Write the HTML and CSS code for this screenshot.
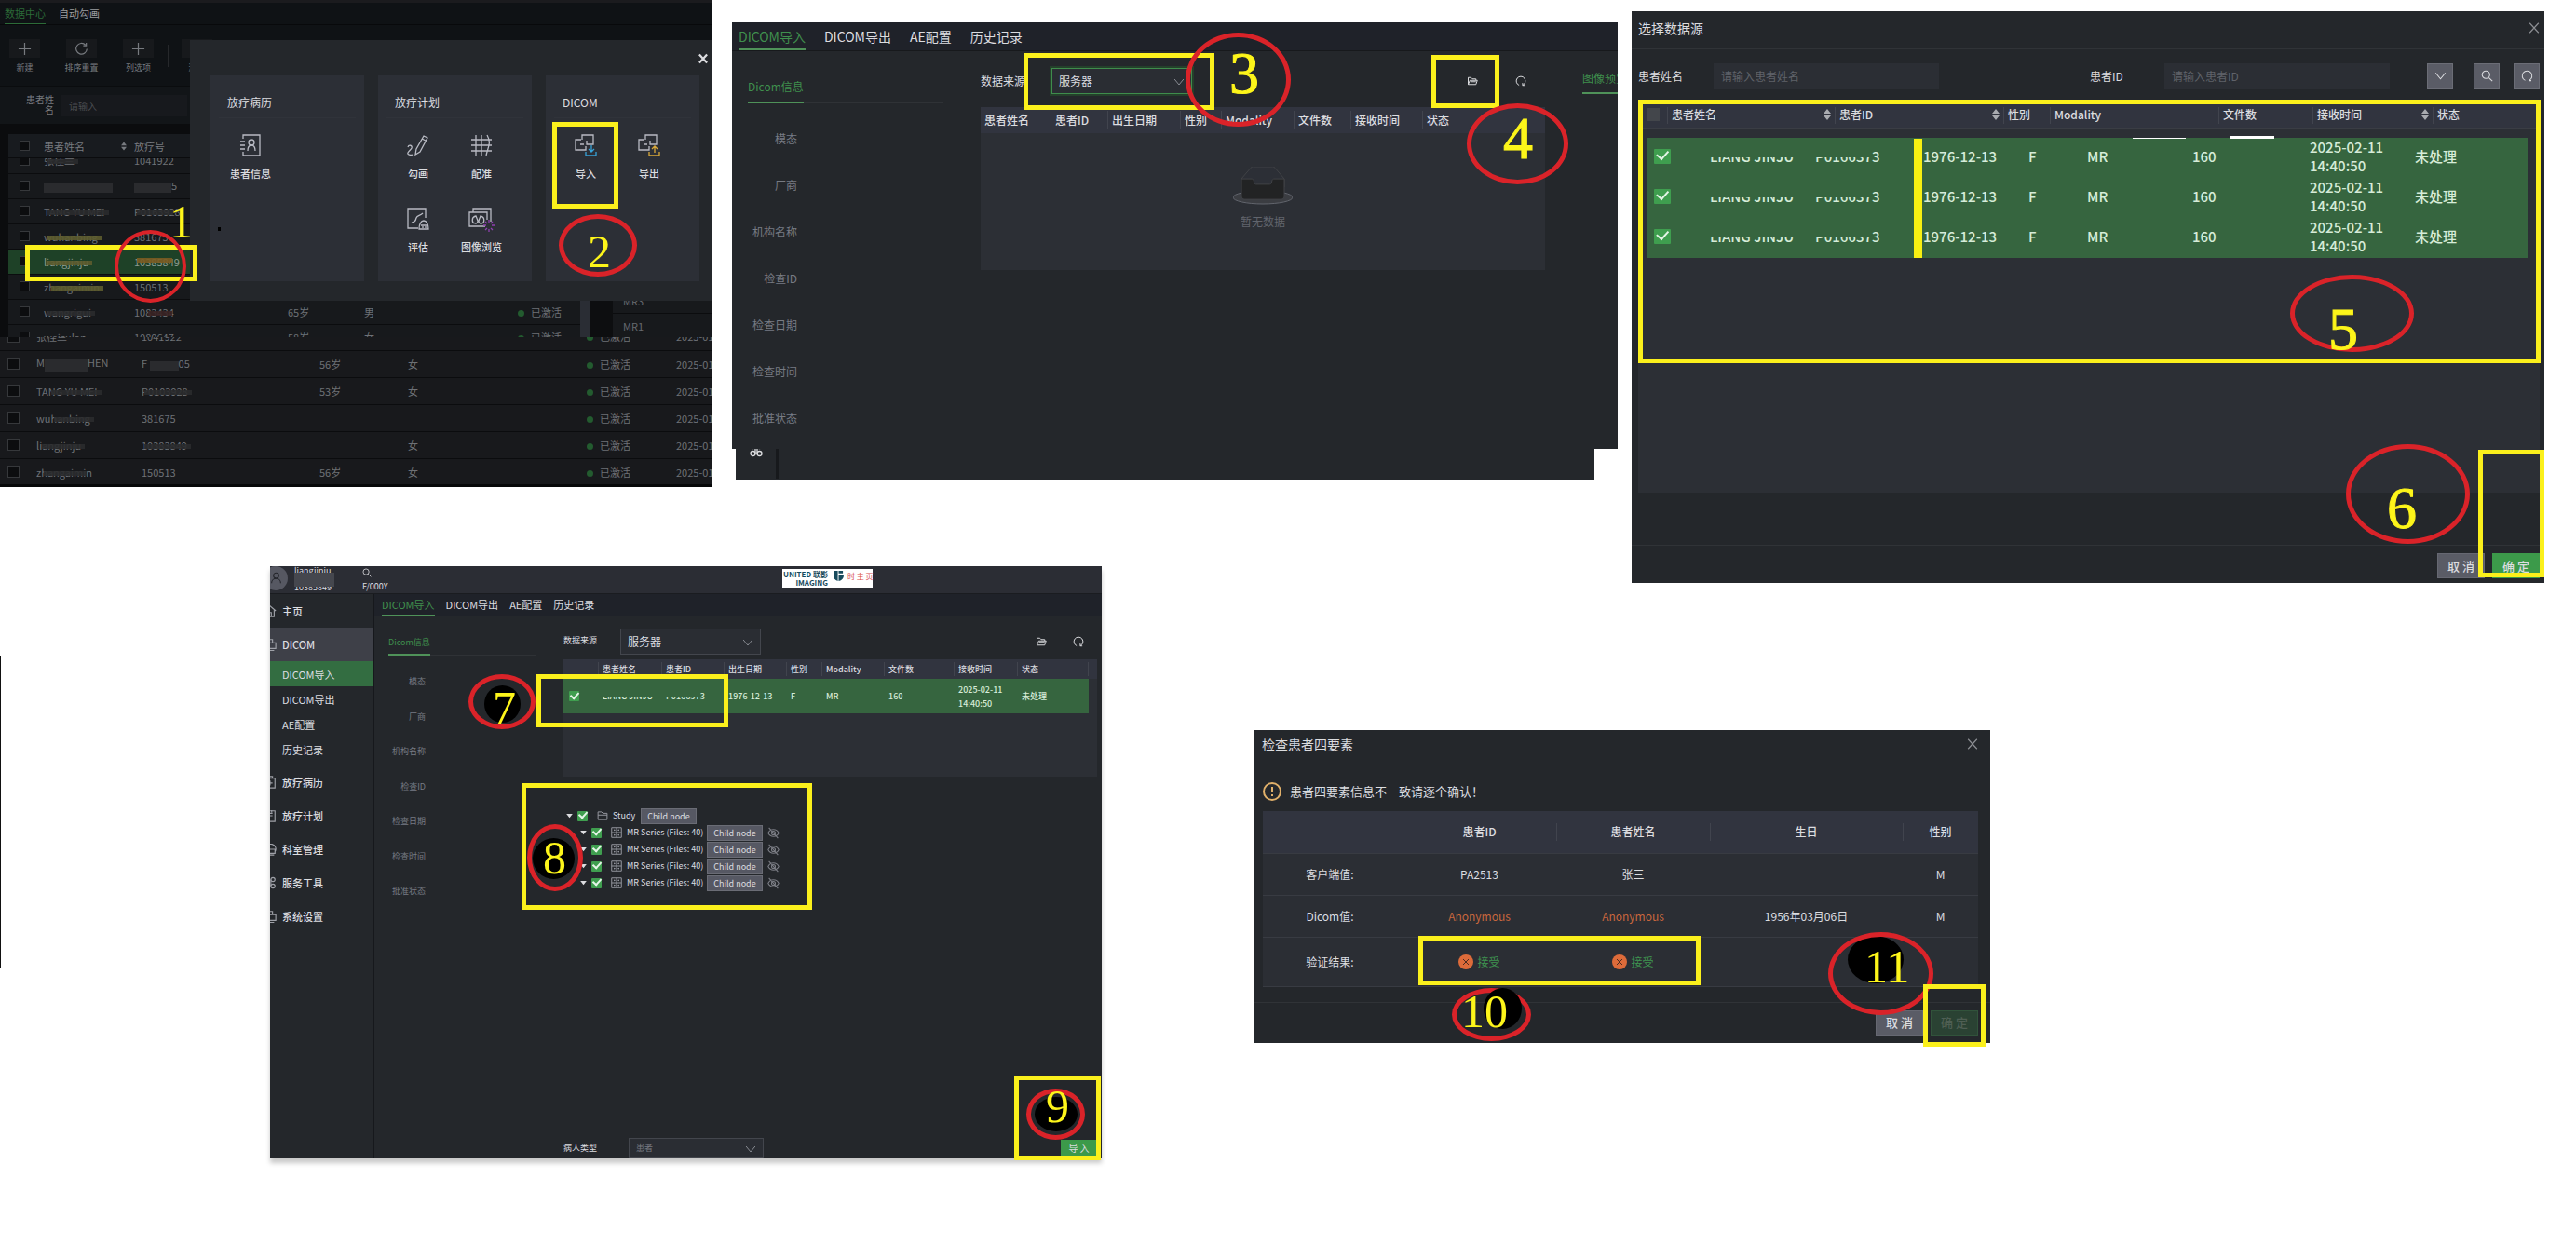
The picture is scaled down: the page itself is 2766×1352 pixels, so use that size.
FILE: index.html
```html
<!DOCTYPE html>
<html lang="zh-CN">
<head>
<meta charset="utf-8">
<title>DICOM导入流程</title>
<link rel="stylesheet" href="styles.css">
</head>
<body>
<svg class="sprite" aria-hidden="true">
  <symbol id="i-plus" viewBox="0 0 16 16"><path d="M8 1v14M1 8h14"/></symbol>
  <symbol id="i-reload" viewBox="0 0 16 16"><path d="M12.5 3.5A6.2 6.2 0 1 0 14.2 8M13.500 1v3.500H10"/></symbol>
  <symbol id="i-redo" viewBox="0 0 16 16"><path d="M5.500 14A6.500 6.500 0 1 1 10.500 14M10.500 10.800V14.300H13.500"/></symbol>
  <symbol id="i-folder" viewBox="0 0 16 16"><path d="M2 13V3h4l2 2h5v2M2 13l2.500-6H15l-2 6zM5 9h8"/></symbol>
  <symbol id="i-folder-closed" viewBox="0 0 16 16"><path d="M1.500 13.500v-11h5l2 2h6v9zM1.500 7h13"/></symbol>
  <symbol id="i-down" viewBox="0 0 16 16"><path d="M1.500 4l6.500 8 6.500-8"/></symbol>
  <symbol id="i-close" viewBox="0 0 16 16"><path d="M2.500 2l11 12M13.500 2l-11 12"/></symbol>
  <symbol id="i-search" viewBox="0 0 16 16"><circle cx="6.500" cy="6.500" r="5"/><path d="M10.200 10.200L15 15"/></symbol>
  <symbol id="i-sort" viewBox="0 0 8 12"><path d="M4 0l4 5H0zM4 12l4-5H0z"/></symbol>
  <symbol id="i-caret" viewBox="0 0 8 6"><path d="M0 0h8L4 5z"/></symbol>
  <symbol id="i-user" viewBox="0 0 16 16"><circle cx="8" cy="5" r="3.500"/><path d="M2 15c0-8 12-8 12 0"/></symbol>
  <symbol id="i-home" viewBox="0 0 16 16"><path d="M1 8l7-6 7 6M3 7v8h10V7M6.500 15v-5h3v5"/></symbol>
  <symbol id="i-screens" viewBox="0 0 16 16"><path d="M5 9H1V2h10v4M6 6h9v7H6zM3 12h2M8 15.500h5"/></symbol>
  <symbol id="i-case" viewBox="0 0 16 16"><path d="M2 3h12v12H2zM5 3V1h6v2M8 6v6M5 9h6"/></symbol>
  <symbol id="i-list" viewBox="0 0 16 16"><path d="M2 2h12v13H2zM8 5h3M8 8h3M6 12h5M10 1v3"/></symbol>
  <symbol id="i-dept" viewBox="0 0 16 16"><path d="M3 8a6 6 0 1 1 11 3M6 8h8v5H6zM8 15h5"/></symbol>
  <symbol id="i-cmd" viewBox="0 0 16 16"><circle cx="4.500" cy="4" r="2.500"/><circle cx="11.500" cy="4" r="2.500"/><circle cx="4.500" cy="12" r="2.500"/><circle cx="11.500" cy="12" r="2.500"/><path d="M7 4v8M9 4v8"/></symbol>
  <symbol id="i-grid" viewBox="0 0 16 16"><path d="M1 1h14v14H1zM8 1v14M1 8h14M4 4.500h2M10 4.500h2M4 11.500h2M10 11.500h2M5 3.500v2M11 3.500v2M5 10.500v2M11 10.500v2"/></symbol>
  <symbol id="i-eye-off" viewBox="0 0 16 16"><path d="M1 8c3-6 11-6 14 0-3 6-11 6-14 0zM2 1l12 14"/><circle cx="8" cy="8" r="2.500"/></symbol>
  <symbol id="i-patient" viewBox="0 0 24 24"><path d="M4 5V1h18v22H4v-4M1 8h5M1 12h5M1 16h5M9 18c0-5 2-6 4-6s4 1 4 6"/><circle cx="13" cy="9" r="3"/></symbol>
  <symbol id="i-draw" viewBox="0 0 24 24"><path d="M1 14c1-3 5-2 4 1-1 2-3 3-4 5s3 3 5 2M9 22l1-6 8-14 4 2-8 15zM16 5l4 2"/></symbol>
  <symbol id="i-register" viewBox="0 0 24 24"><path d="M6 1v22M12 1v22M18 1c5 9 1 12-1 22M1 6h22M1 12h22M1 18h22"/></symbol>
  <symbol id="i-assess" viewBox="0 0 24 24"><path d="M12 22H1V1h19v10M5 16c3-1 4-1 5-5 1-3 4-2 7-5M13 23c0-5 2-9 5-9s5 4 5 9zM15 19h6M17 22v-2M20 22v-2"/></symbol>
  <symbol id="i-browse" viewBox="0 0 28 26"><path d="M5 5V1h19v14M18 20H1V5h19v8M8 9c-5 1-5 8 0 8 4-1 1-5 0-8zM13 9c5 1 5 8 0 8-4-1-1-5 0-8z"/><path class="violet" d="M22 13v3M22 23v3M16 19h3M25 19h3M18 15l2 2M24 22l2 2M26 15l-2 2M20 22l-2 2"/></symbol>
  <symbol id="i-import" viewBox="0 0 24 24"><path d="M7 6H1v11h11v-4M6 11h4M8 6V1h12v10h-7V7"/><path class="sky" d="M18 12v7M15 16l3 3 3-3M12 19v4h11v-4"/></symbol>
  <symbol id="i-export" viewBox="0 0 24 24"><path d="M7 6H1v11h11v-4M6 11h4M8 6V1h12v10h-7V7"/><path class="gold" d="M18 20v-7M15 16l3-3 3 3M12 19v4h11v-4"/></symbol>
</svg>

<main class="board">
  <div class="row row-top">

    <section class="panel center-panel">
      <nav class="dc-tabs"><a class="on" href="#data">数据中心</a><a href="#auto">自动勾画</a></nav>
      <div class="dc-tools">
        <button><i><svg><use href="#i-plus"/></svg></i>新建</button>
        <button><i><svg><use href="#i-reload"/></svg></i>排序重置</button>
        <button><i><svg><use href="#i-plus"/></svg></i>列选项</button>
        <span class="rule"></span>
        <button><i><svg><use href="#i-reload"/></svg></i>激活</button>
      </div>
      <div class="dc-search"><label for="dc-name">患者姓名</label><input id="dc-name" placeholder="请输入"></div>
      <div class="dc-upper">
        <div class="dc-list">
          <div class="dc-head"><input type="checkbox" aria-label="全选"><span class="name">患者姓名</span><svg class="sort"><use href="#i-sort"/></svg><span>放疗号</span></div>
          <div class="dc-view">
            <table class="dc-table">
              <colgroup><col class="w38"><col class="w97"><col class="w165"><col class="w82"><col class="w165"><col></colgroup>
              <tr><td><input type="checkbox" aria-label="选择"></td><td><span class="mask">张桂兰</span></td><td>1041922</td><td></td><td></td><td></td></tr>
              <tr><td><input type="checkbox" aria-label="选择"></td><td><span class="block"></span></td><td><span class="block short"></span>5</td><td></td><td></td><td></td></tr>
              <tr><td><input type="checkbox" aria-label="选择"></td><td><span class="mask">TANG YU MEI</span></td><td><span class="mask">P01639</span>28</td><td></td><td></td><td></td></tr>
              <tr><td><input type="checkbox" aria-label="选择"></td><td><span class="mask olive">wuhanbing</span></td><td>381675</td><td></td><td></td><td></td></tr>
              <tr class="picked"><td><input type="checkbox" aria-label="选择"></td><td><span class="mask olive">liangjinju</span></td><td><span class="mask amber">103858</span>49</td><td></td><td></td><td></td></tr>
              <tr><td><input type="checkbox" aria-label="选择"></td><td>z<span class="mask olive">hangaimin</span></td><td>150513</td><td></td><td></td><td></td></tr>
              <tr><td><input type="checkbox" aria-label="选择"></td><td><span class="mask">wangrigui</span></td><td>10<span class="mask rose">8343</span>4</td><td>65岁</td><td>男</td><td><b class="dot"></b>已激活</td></tr>
              <tr><td><input type="checkbox" aria-label="选择"></td><td>weisulan</td><td>1080647</td><td>58岁</td><td>女</td><td><b class="dot"></b>已激活</td></tr>
            </table>
          </div>
        </div>
        <div class="dc-bar"></div>
        <div class="dc-series"><p>MR3</p><p>MR1</p></div>
      </div>
      <div class="dc-lower">
        <table class="dc-table big">
          <colgroup><col class="w39"><col class="w113"><col class="w191"><col class="w95"><col class="w192"><col class="w96"><col></colgroup>
          <tr><td><input type="checkbox" aria-label="选择"></td><td>张桂兰</td><td>1041922</td><td></td><td></td><td><b class="dot"></b>已激活</td><td>2025-01</td></tr>
          <tr><td><input type="checkbox" aria-label="选择"></td><td>M<span class="block mid"></span>HEN</td><td>F <span class="block tiny"></span>05</td><td>56岁</td><td>女</td><td><b class="dot"></b>已激活</td><td>2025-01</td></tr>
          <tr><td><input type="checkbox" aria-label="选择"></td><td>TA<span class="mask">NG YU MEI</span></td><td><span class="mask">P0103928</span></td><td>53岁</td><td>女</td><td><b class="dot"></b>已激活</td><td>2025-01</td></tr>
          <tr><td><input type="checkbox" aria-label="选择"></td><td>wu<span class="mask">hanbing</span></td><td>381675</td><td></td><td></td><td><b class="dot"></b>已激活</td><td>2025-01</td></tr>
          <tr><td><input type="checkbox" aria-label="选择"></td><td>l<span class="mask">iangjinju</span></td><td><span class="mask">10383849</span></td><td></td><td>女</td><td><b class="dot"></b>已激活</td><td>2025-01</td></tr>
          <tr><td><input type="checkbox" aria-label="选择"></td><td>z<span class="mask">hangaim</span>in</td><td>150513</td><td>56岁</td><td>女</td><td><b class="dot"></b>已激活</td><td>2025-01</td></tr>
        </table>
      </div>

      <div class="launcher">
        <button class="launcher-x" aria-label="关闭"><svg><use href="#i-close"/></svg></button>
        <div class="cards">
          <div class="card"><h3>放疗病历</h3><div class="apps">
            <button><svg><use href="#i-patient"/></svg>患者信息</button></div></div>
          <div class="card"><h3>放疗计划</h3><div class="apps">
            <button><svg><use href="#i-draw"/></svg>勾画</button>
            <button><svg><use href="#i-register"/></svg>配准</button>
            <button><svg><use href="#i-assess"/></svg>评估</button>
            <button><svg class="wide"><use href="#i-browse"/></svg>图像浏览</button></div></div>
          <div class="card"><h3>DICOM</h3><div class="apps">
            <button><svg><use href="#i-import"/></svg>导入</button>
            <button><svg><use href="#i-export"/></svg>导出</button></div></div>
        </div>
      </div>
      <span class="speck"></span>
      <span class="box b1"></span><span class="ring r1"></span><span class="num n1">1</span>
      <span class="box b2"></span><span class="ring r2"></span><span class="num n2">2</span>
    </section>

    <section class="panel import-panel">
      <div class="import-main">
        <nav class="tabs"><a class="on" href="#in">DICOM导入</a><a href="#out">DICOM导出</a><a href="#ae">AE配置</a><a href="#log">历史记录</a></nav>
        <div class="import-body">
          <aside class="info">
            <h4><span>Dicom信息</span></h4>
            <ul><li>模态</li><li>厂商</li><li>机构名称</li><li>检查ID</li><li>检查日期</li><li>检查时间</li><li>批准状态</li></ul>
          </aside>
          <div class="work">
            <div class="source"><label for="src1">数据来源</label>
              <span class="pick focus"><select id="src1"><option>服务器</option></select><svg><use href="#i-down"/></svg></span>
              <button class="ico first" aria-label="打开"><svg><use href="#i-folder"/></svg></button><button class="ico" aria-label="刷新"><svg><use href="#i-redo"/></svg></button></div>
            <div class="grid-area">
              <table class="cols">
                <colgroup><col class="w76"><col class="w61"><col class="w78"><col class="w44"><col class="w78"><col class="w61"><col class="w77"><col></colgroup>
                <tr><th>患者姓名</th><th>患者ID</th><th>出生日期</th><th>性别</th><th>Modality</th><th>文件数</th><th>接收时间</th><th>状态</th></tr>
              </table>
              <div class="empty">
                <svg viewBox="0 0 64 41"><ellipse cx="32" cy="33" rx="32" ry="7" fill="#3b3d42"/><path d="M55 13L45 1.300C44.400.500 43.600 0 42.700 0H21.300c-.9 0-1.700.500-2.300 1.300L9 13v9h46z" fill="#2c2f36" stroke="#404246"/><path d="M41.600 16c0-1.600 1-2.900 2.200-2.900H55v18.100c0 2.200-1.300 3.900-3 3.900H12c-1.700 0-3-1.700-3-3.900V13.100h11.200c1.200 0 2.200 1.300 2.200 2.900s1 2.900 2.200 2.900h14.800c1.200 0 2.200-1.300 2.200-2.900z" fill="#222324" stroke="#404246"/></svg>
                <p>暂无数据</p>
              </div>
            </div>
          </div>
          <div class="preview"><span>图像预览</span></div>
        </div>
      </div>
      <div class="import-tail"><svg><use href="#i-cmd"/></svg><span></span></div>
      <span class="box b3"></span><span class="ring r3"></span><span class="num lg n3">3</span>
      <span class="box b4"></span><span class="ring r4"></span><span class="num lg n4">4</span>
    </section>

    <section class="panel select-panel">
      <header class="dialog-head"><h2>选择数据源</h2><button aria-label="关闭"><svg><use href="#i-close"/></svg></button></header>
      <div class="query">
        <label for="q-name">患者姓名</label><input id="q-name" placeholder="请输入患者姓名">
        <label class="second" for="q-id">患者ID</label><input id="q-id" placeholder="请输入患者ID">
        <button class="tool t1" aria-label="展开"><svg><use href="#i-down"/></svg></button><button class="tool t2" aria-label="搜索"><svg><use href="#i-search"/></svg></button><button class="tool t3" aria-label="重置"><svg><use href="#i-redo"/></svg></button>
      </div>
      <div class="select-grid">
        <table class="cols">
          <colgroup><col class="w32"><col class="w180"><col class="w181"><col class="w50"><col class="w181"><col class="w101"><col class="w129"><col></colgroup>
          <tr><th class="tick"><input type="checkbox" aria-label="全选"></th><th><span class="th">患者姓名<svg><use href="#i-sort"/></svg></span></th><th><span class="th">患者ID<svg><use href="#i-sort"/></svg></span></th><th>性别</th><th>Modality</th><th>文件数</th><th><span class="th">接收时间<svg><use href="#i-sort"/></svg></span></th><th>状态</th></tr>
        </table>
        <table class="hits">
          <colgroup><col class="w67"><col class="w113"><col class="w116"><col class="w113"><col class="w63"><col class="w113"><col class="w126"><col class="w113"><col></colgroup>
          <tr><td><input type="checkbox" checked aria-label="选择"></td><td><span class="fade">LIANG JINJU</span></td><td><span class="fade">P016637</span>3</td><td>1976-12-13</td><td>F</td><td>MR</td><td>160</td><td>2025-02-11<br>14:40:50</td><td>未处理</td></tr>
          <tr><td><input type="checkbox" checked aria-label="选择"></td><td><span class="fade">LIANG JINJU</span></td><td><span class="fade">P016637</span>3</td><td>1976-12-13</td><td>F</td><td>MR</td><td>160</td><td>2025-02-11<br>14:40:50</td><td>未处理</td></tr>
          <tr><td><input type="checkbox" checked aria-label="选择"></td><td><span class="fade">LIANG JINJU</span></td><td><span class="fade">P016637</span>3</td><td>1976-12-13</td><td>F</td><td>MR</td><td>160</td><td>2025-02-11<br>14:40:50</td><td>未处理</td></tr>
        </table>
      </div>
      <footer class="actions"><button class="btn">取 消</button><button class="btn ok">确 定</button></footer>
      <span class="chip c1"></span><span class="chip c2"></span><span class="strip"></span>
      <span class="box b5"></span><span class="ring r5"></span><span class="num lg n5">5</span>
      <span class="box b6"></span><span class="ring r6"></span><span class="num lg n6">6</span>
    </section>
  </div>

  <div class="row row-bottom">
    <section class="panel app-panel">
      <header class="app-head">
        <span class="avatar"><svg><use href="#i-user"/></svg></span>
        <span class="who">liangjinju<br>10385849</span>
        <span class="meta"><svg><use href="#i-search"/></svg>F/000Y</span>
        <span class="brand"><strong>UNITED 联影<br>IMAGING</strong><svg viewBox="0 0 12 12"><path d="M0 0h5v12Q0 10 0 6zM6 0h5v3H6zM6 5h6Q12 11 6 12z" fill="#174a5c"/></svg><em>时 主 页</em></span>
      </header>
      <div class="app-body">
        <nav class="side">
          <a class="top" href="#home"><svg><use href="#i-home"/></svg>主页</a>
          <a class="top open" href="#dicom"><svg><use href="#i-screens"/></svg>DICOM</a>
          <a class="sub on" href="#in">DICOM导入</a>
          <a class="sub" href="#out">DICOM导出</a>
          <a class="sub" href="#ae">AE配置</a>
          <a class="sub last" href="#log">历史记录</a>
          <a class="top" href="#rec"><svg><use href="#i-case"/></svg>放疗病历</a>
          <a class="top" href="#plan"><svg><use href="#i-list"/></svg>放疗计划</a>
          <a class="top" href="#dept"><svg><use href="#i-dept"/></svg>科室管理</a>
          <a class="top" href="#tools"><svg><use href="#i-cmd"/></svg>服务工具</a>
          <a class="top" href="#sys"><svg><use href="#i-screens"/></svg>系统设置</a>
        </nav>
        <div class="app-main">
          <nav class="tabs small"><a class="on" href="#in">DICOM导入</a><a href="#out">DICOM导出</a><a href="#ae">AE配置</a><a href="#log">历史记录</a></nav>
          <div class="app-work">
            <aside class="info small">
              <h4><span>Dicom信息</span></h4>
              <ul><li>模态</li><li>厂商</li><li>机构名称</li><li>检查ID</li><li>检查日期</li><li>检查时间</li><li>批准状态</li></ul>
            </aside>
            <div class="work small">
              <div class="source"><label for="src2">数据来源</label>
                <span class="pick"><select id="src2"><option>服务器</option></select><svg><use href="#i-down"/></svg></span>
                <button class="ico first" aria-label="打开"><svg><use href="#i-folder"/></svg></button><button class="ico" aria-label="刷新"><svg><use href="#i-redo"/></svg></button></div>
              <div class="grid-area">
                <table class="cols small">
                  <colgroup><col class="w38"><col class="w68"><col class="w67"><col class="w67"><col class="w38"><col class="w67"><col class="w75"><col class="w68"><col class="w76"><col></colgroup>
                  <tr><th></th><th>患者姓名</th><th>患者ID</th><th>出生日期</th><th>性别</th><th>Modality</th><th>文件数</th><th>接收时间</th><th>状态</th><th></th></tr>
                  <tr class="sel"><td class="tick"><input type="checkbox" checked aria-label="选择"></td><td><span class="fade">LIANG JINJU</span></td><td><span class="fade">P016637</span>3</td><td>1976-12-13</td><td>F</td><td>MR</td><td>160</td><td>2025-02-11<br>14:40:50</td><td>未处理</td><td class="off"></td></tr>
                </table>
              </div>
              <div class="tree">
                <div class="node"><svg class="caret"><use href="#i-caret"/></svg><input type="checkbox" id="st" checked><svg class="kind"><use href="#i-folder-closed"/></svg><label for="st">Study</label><button>Child node</button></div>
                <div class="node child"><svg class="caret"><use href="#i-caret"/></svg><input type="checkbox" id="s1" checked><svg class="kind"><use href="#i-grid"/></svg><label for="s1">MR Series (Files: 40)</label><button>Child node</button><svg class="eye"><use href="#i-eye-off"/></svg></div>
                <div class="node child"><svg class="caret"><use href="#i-caret"/></svg><input type="checkbox" id="s2" checked><svg class="kind"><use href="#i-grid"/></svg><label for="s2">MR Series (Files: 40)</label><button>Child node</button><svg class="eye"><use href="#i-eye-off"/></svg></div>
                <div class="node child"><svg class="caret"><use href="#i-caret"/></svg><input type="checkbox" id="s3" checked><svg class="kind"><use href="#i-grid"/></svg><label for="s3">MR Series (Files: 40)</label><button>Child node</button><svg class="eye"><use href="#i-eye-off"/></svg></div>
                <div class="node child"><svg class="caret"><use href="#i-caret"/></svg><input type="checkbox" id="s4" checked><svg class="kind"><use href="#i-grid"/></svg><label for="s4">MR Series (Files: 40)</label><button>Child node</button><svg class="eye"><use href="#i-eye-off"/></svg></div>
              </div>
              <div class="submit"><label for="ptype">病人类型</label>
                <span class="pick"><select id="ptype"><option>患者</option></select><svg><use href="#i-down"/></svg></span>
                <button class="go">导 入</button></div>
            </div>
          </div>
        </div>
      </div>
      <span class="box b7"></span><span class="blot k7"></span><span class="ring r7"></span><span class="num n7">7</span>
      <span class="box b8"></span><span class="blot k8"></span><span class="ring r8"></span><span class="num n8">8</span>
      <span class="box b9"></span><span class="blot k9"></span><span class="ring r9"></span><span class="num n9">9</span>
    </section>

    <section class="panel check-panel">
      <header class="dialog-head"><h2>检查患者四要素</h2><button aria-label="关闭"><svg><use href="#i-close"/></svg></button></header>
      <p class="alert"><svg viewBox="0 0 20 20"><circle cx="10" cy="10" r="9"/><path d="M10 5v6M10 13v2"/></svg>患者四要素信息不一致请逐个确认！</p>
      <table class="verify">
        <colgroup><col class="w150"><col class="w165"><col class="w165"><col class="w207"><col></colgroup>
        <tr><th></th><th>患者ID</th><th>患者姓名</th><th>生日</th><th>性别</th></tr>
        <tr><td>客户端值:</td><td>PA2513</td><td>张三</td><td></td><td>M</td></tr>
        <tr><td>Dicom值:</td><td class="bad">Anonymous</td><td class="bad">Anonymous</td><td>1956年03月06日</td><td>M</td></tr>
        <tr class="result"><td>验证结果:</td><td><span class="verdict"><svg viewBox="0 0 16 16"><circle cx="8" cy="8" r="8"/><path d="M5 5l6 6M11 5l-6 6"/></svg><a href="#accept">接受</a></span></td><td><span class="verdict"><svg viewBox="0 0 16 16"><circle cx="8" cy="8" r="8"/><path d="M5 5l6 6M11 5l-6 6"/></svg><a href="#accept">接受</a></span></td><td></td><td></td></tr>
      </table>
      <footer class="actions"><button class="btn">取 消</button><button class="btn ok" disabled>确 定</button></footer>
      <span class="box b10"></span><span class="ring r10"></span><span class="blot k10"></span><span class="num n10">10</span>
      <span class="blot k11"></span><span class="ring r11"></span><span class="box b11"></span><span class="num n11">11</span>
    </section>
  </div>
  <span class="edge"></span>
</main>
</body>
</html>
```
FILE: styles.css
```css
* { box-sizing: border-box; }
body {
  margin: 0;
  background: #fff;
  color: #dcdde0;
  font: 12px/16px "Noto Sans CJK SC", sans-serif;
}
h2, h3, h4, p, ul { margin: 0; padding: 0; font-weight: 400; list-style: none; }
a { color: inherit; text-decoration: none; }
button, input, select { margin: 0; padding: 0; border: 0; border-radius: 0; background: none; color: inherit; font: inherit; }
svg { display: block; flex: none; width: 16px; height: 16px; fill: none; stroke: currentColor; stroke-width: 1.3; }
.sprite { position: absolute; width: 0; height: 0; }
.violet { stroke: #8e3fb0; }
.sky { stroke: #36a3d9; }
.gold { stroke: #d9a93a; }
#i-sort path, #i-caret path { fill: currentColor; stroke: none; }
table { border-collapse: collapse; table-layout: fixed; width: 100%; }
td, th { padding: 0; text-align: left; font-weight: 500; white-space: nowrap; }
td { font-weight: 400; }

input[type="checkbox"] { appearance: none; display: grid; place-items: center; flex: none; }
input:checked { background: #3f9e4f; border-radius: 1px; }
input:checked::after {
  content: "";
  width: 35%;
  height: 65%;
  border: solid #e6f5e8;
  border-width: 0 2px 2px 0;
  rotate: 42deg;
  translate: 0 -15%;
}

.w32 { width: 32px } .w38 { width: 38px } .w39 { width: 39px } .w44 { width: 44px } .w50 { width: 50px }
.w61 { width: 61px } .w63 { width: 63px } .w67 { width: 67px } .w68 { width: 68px } .w75 { width: 75px }
.w76 { width: 76px } .w77 { width: 77px } .w78 { width: 78px } .w82 { width: 82px } .w95 { width: 95px }
.w96 { width: 96px } .w97 { width: 97px } .w101 { width: 101px } .w113 { width: 113px }
.w116 { width: 116px } .w126 { width: 126px } .w129 { width: 129px } .w150 { width: 150px } .w165 { width: 165px }
.w180 { width: 180px } .w181 { width: 181px } .w191 { width: 191px } .w192 { width: 192px } .w207 { width: 207px }

/* board */
.board { position: relative; min-height: 100vh; overflow: hidden; }
.row { display: grid; align-items: start; }
.row-top { grid-template-columns: 764fr 22fr 951fr 15fr 980fr 34fr; }
.row-bottom { grid-template-columns: 290fr 893fr 164fr 790fr 629fr; margin-top: -18px; }
.panel { position: relative; min-width: 0; background: #24272b; }
.center-panel { grid-column: 1; }
.import-panel { grid-column: 3; margin-top: 24px; }
.select-panel { grid-column: 5; margin-top: 12px; }
.app-panel { grid-column: 2; }
.check-panel { grid-column: 4; margin-top: 176px; }
.edge { position: absolute; left: 0; top: 704px; width: 1px; height: 335px; background: #111; }

/* annotations */
.box, .ring, .num, .blot, .strip, .chip, .speck { position: absolute; pointer-events: none; }
.box { border: 5px solid #fbf01c; }
.ring { border: 5px solid #da2329; border-radius: 50%; }
.blot { border-radius: 50%; background: #000; }
.num { color: #fdf51a; font: 50px/50px "Liberation Serif", serif; }
.num.lg { font-size: 64px; line-height: 64px; -webkit-text-stroke: 1px #fdf51a; }
.speck { left: 234px; top: 244px; width: 3px; height: 4px; background: #000; }
.b1 { left: 27px; top: 263px; width: 185px; height: 39px; }
.r1 { left: 123px; top: 247px; width: 77px; height: 78px; border-width: 4px; }
.n1 { left: 182px; top: 213px; }
.b2 { left: 593px; top: 131px; width: 71px; height: 93px; }
.r2 { left: 600px; top: 230px; width: 84px; height: 67px; }
.n2 { left: 631px; top: 245px; }
.b3 { left: 313px; top: 33px; width: 205px; height: 61px; }
.r3 { left: 487px; top: 11px; width: 113px; height: 101px; }
.n3 { left: 534px; top: 23px; }
.b4 { left: 751px; top: 35px; width: 73px; height: 57px; }
.r4 { left: 789px; top: 87px; width: 109px; height: 87px; }
.n4 { left: 828px; top: 93px; }
.b5 { left: 7px; top: 95px; width: 969px; height: 283px; }
.r5 { left: 707px; top: 283px; width: 133px; height: 83px; }
.n5 { left: 748px; top: 310px; }
.b6 { left: 909px; top: 471px; width: 71px; height: 137px; }
.r6 { left: 767px; top: 465px; width: 133px; height: 107px; }
.n6 { left: 811px; top: 502px; }
.strip { left: 303px; top: 137px; width: 9px; height: 128px; background: #f8f012; }
.chip { background: #fff; }
.c1 { left: 538px; top: 136px; width: 57px; height: 1px; }
.c2 { left: 643px; top: 134px; width: 47px; height: 3px; }
.b7 { left: 286px; top: 116px; width: 206px; height: 57px; }
.r7 { left: 213px; top: 116px; width: 72px; height: 59px; }
.k7 { left: 230px; top: 128px; width: 39px; height: 40px; }
.n7 { left: 239px; top: 127px; }
.b8 { left: 270px; top: 233px; width: 312px; height: 136px; }
.r8 { left: 276px; top: 277px; width: 60px; height: 72px; }
.k8 { left: 282px; top: 292px; width: 45px; height: 44px; }
.n8 { left: 293px; top: 288px; }
.b9 { left: 799px; top: 547px; width: 93px; height: 91px; }
.r9 { left: 812px; top: 561px; width: 63px; height: 55px; }
.k9 { left: 821px; top: 570px; width: 46px; height: 37px; }
.n9 { left: 833px; top: 555px; }
.b10 { left: 176px; top: 221px; width: 303px; height: 53px; }
.r10 { left: 212px; top: 277px; width: 85px; height: 57px; }
.k10 { left: 246px; top: 277px; width: 41px; height: 44px; }
.n10 { left: 222px; top: 277px; }
.b11 { left: 718px; top: 273px; width: 67px; height: 67px; }
.r11 { left: 616px; top: 217px; width: 113px; height: 89px; }
.k11 { left: 637px; top: 221px; width: 60px; height: 51px; }
.n11 { left: 655px; top: 229px; }

/* data centre */
.center-panel { background: #0f1215; border-top: 3px solid #1b1b1e; border-bottom: 3px solid #070809; color: #777a7f; font-size: 11px; overflow: hidden; }
.center-panel .launcher, .center-panel .box, .center-panel .ring, .center-panel .num, .center-panel .speck { margin-top: -3px; }
.dc-tabs { display: flex; gap: 14px; height: 24px; padding-left: 5px; border-bottom: 1px solid #08090b; color: #9b9da0; line-height: 23px; }
.dc-tabs .on { color: #2c6b38; border-bottom: 1px solid #2c6b38; }
.dc-tools { display: flex; gap: 28px; height: 66px; padding: 15px 0 0 10px; border-bottom: 1px solid #0a0c0e; font-size: 9px; line-height: 12px; }
.dc-tools button { width: 33px; flex: none; white-space: nowrap; display: flex; flex-direction: column; align-items: center; gap: 5px; align-self: flex-start; }
.dc-tools i { display: grid; place-items: center; width: 33px; height: 20px; background: #17191c; }
.dc-tools svg { width: 15px; height: 15px; }
.rule { width: 1px; height: 24px; margin: 6px -14px 0 -13px; background: #26282b; }
.dc-search { display: flex; align-items: center; gap: 8px; height: 40px; padding-left: 26px; background: #121518; font-size: 10px; line-height: 11px; }
.dc-search label { width: 32px; text-align: right; padding-bottom: 3px; }
.dc-search input { width: 135px; height: 23px; padding-left: 8px; background: #17191d; }
.dc-search input::placeholder { color: #4b4d52; }
.dc-upper { display: flex; height: 229px; padding: 11px 0 0 9px; background: #0b0c0e; overflow: hidden; }
.dc-list { width: 614px; background: #17191c; }
.dc-head { display: flex; align-items: center; height: 26px; padding-left: 12px; background: #181b1f; border-bottom: 1px solid #0b0c0e; }
.dc-head .name { width: 83px; margin-left: 15px; }
.dc-head .sort { width: 6px; height: 10px; margin-right: 8px; }
.dc-view { height: 192px; overflow: hidden; }
.dc-table { margin-top: -11px; line-height: 14px; color: #6e7176; }
.dc-table td { height: 27px; border-bottom: 1px solid #0b0c0e; }
.dc-table td:first-child { padding-left: 12px; }
.center-panel input[type="checkbox"] { width: 11px; height: 11px; border: 1px solid #36383b; background: #0c0d0f; }
.picked td { background: #1e4127; color: #8c9a8e; }
.dot { display: inline-block; width: 7px; height: 7px; margin-right: 7px; border-radius: 50%; background: #235b2f; }
.dc-bar { width: 35px; flex: none; border-left: 10px solid #2a2d34; background: #0d0e10; }
.dc-series { flex: 1; background: #17191c; padding-top: 166px; }
.dc-series p { height: 27px; padding-left: 11px; border-bottom: 1px solid #0b0c0e; line-height: 26px; color: #66696e; }
.dc-lower { height: 158px; overflow: hidden; background: #18191c; }
.dc-table.big { margin-top: -15px; }
.big td { height: 29px; }
.big td:first-child { padding-left: 8px; }
.center-panel .big input { width: 13px; height: 13px; }
.mask { position: relative; }
.mask::after { content: ""; position: absolute; left: 3px; right: -4px; top: 7px; height: 5px; background: #2a2b2e; opacity: .9; }
.olive::after { background: #5d5c2f; }
.amber::after { background: #7b5c22; top: 4px; }
.rose::after { background: #3a2325; }
.block { display: inline-block; width: 74px; height: 10px; background: #2a2b2e; vertical-align: middle; }
.block.short { width: 40px; }
.block.mid { width: 46px; height: 14px; }
.block.tiny { width: 31px; }

.launcher { position: absolute; left: 204px; right: 0; top: 43px; height: 280px; padding: 38px 13px 22px 22px; background: #24272b; color: #dcdde0; }
.launcher-x { position: absolute; right: 3px; top: 14px; }
.launcher-x svg { width: 12px; height: 12px; stroke-width: 3; }
.cards { display: grid; grid-template-columns: repeat(3, 1fr); gap: 15px; height: 220px; }
.card { padding: 20px 9px 0; background: #2c2f36; }
.card h3 { height: 26px; padding-left: 9px; border-bottom: 1px solid #30333a; font-size: 12px; line-height: 18px; }
.apps { display: grid; grid-template-columns: 68px 68px; grid-auto-rows: 79px; padding-top: 17px; }
.apps button { display: flex; flex-direction: column; align-items: center; gap: 10px; font-size: 11px; font-weight: 500; white-space: nowrap; }
.apps svg { width: 24px; height: 24px; stroke: #b9bbc4; }
.apps svg.wide { width: 28px; height: 26px; margin-bottom: -2px; }

/* DICOM import */
.import-panel { background: none; }
.import-main { background: #24272b; overflow: hidden; }
.tabs { display: flex; gap: 20px; height: 31px; padding-left: 7px; background: #1f2229; border-bottom: 1px solid #17191c; font-size: 14px; line-height: 31px; }
.tabs .on, .info h4 span, .preview span { color: #3f8f4d; border-bottom: 2px solid #4f9259; }
.import-body { display: flex; padding-left: 17px; padding-bottom: 8px; }
.info { width: 210px; flex: none; margin-right: 40px; }
.info h4 { display: flex; align-items: flex-end; height: 56px; box-shadow: inset 0 -1px #2f3236; }
.info h4 span { padding-bottom: 8px; }
.info ul { display: grid; grid-auto-rows: 50px; width: 53px; margin-top: 13px; color: #777b84; text-align: right; line-height: 50px; }
.info li { white-space: nowrap; }
.work { flex: 1; min-width: 0; }
.source { display: flex; align-items: center; height: 28px; margin-top: 18px; }
.source label { width: 76px; }
.pick { position: relative; width: 151px; height: 28px; border: 1px solid #43464d; background: #2a2d33; }
.pick.focus { border-color: #3f8c4c; box-shadow: 0 0 0 2px #24402b; }
.pick select { appearance: none; width: 100%; height: 100%; padding-left: 7px; outline: 0; }
.pick svg { position: absolute; right: 7px; top: 8px; width: 12px; height: 12px; stroke: #8a8d94; }
.ico { margin-right: 20px; }
.ico.first { margin: 0 40px 0 auto; }
.ico svg { width: 12px; height: 12px; }
.grid-area { height: 175px; margin-top: 14px; background: #2c2f35; }
.cols tr:first-child { background: #31343f; }
.cols th { position: relative; height: 28px; padding-left: 4px; }
.cols th + th::before { content: ""; position: absolute; left: -1px; top: 15%; height: 70%; border-left: 1px solid #41444e; }
.empty { padding-top: 36px; text-align: center; color: #62656d; }
.empty svg { width: 64px; height: 41px; margin: 0 auto 10px; stroke-width: 1; }
.preview { width: 38px; margin-left: 40px; flex: none; white-space: nowrap; overflow: hidden; padding-top: 18px; }
.preview span { display: block; height: 28px; line-height: 22px; }
.import-tail { display: flex; height: 33px; margin: 0 25px 0 4px; padding-bottom: 1px; background: #24272b; overflow: hidden; }
.import-tail svg { margin: -7px 0 0 14px; }
.import-tail span { width: 3px; margin-left: 13px; background: #17191c; }

/* dialogs */
.dialog-head { display: flex; align-items: center; justify-content: space-between; height: 41px; padding: 0 4px 4px 7px; border-bottom: 1px solid #303337; }
.dialog-head h2 { font-size: 14px; }
.dialog-head svg { width: 14px; height: 14px; color: #8d8f94; }
.query { display: flex; align-items: center; height: 54px; padding: 8px 5px 5px 7px; }
.query label { width: 81px; }
.query label.second { width: 80px; margin-left: auto; }
.query input { width: 242px; height: 28px; padding-left: 8px; background: #2b2e34; }
.query input::placeholder { color: #5f6269; }
.tool { display: grid; place-items: center; width: 28px; height: 28px; border: 1px solid #6b6d76; background: #5a5c66; }
.tool svg { width: 13px; height: 13px; }
.t1 { margin-left: 40px; }
.t2 { margin-left: 22px; }
.t3 { margin-left: 15px; }
.select-grid { min-height: 422px; margin: 0 5px 0 7px; padding-top: 4px; background: #2c2f35; }
.select-grid .cols { border-bottom: 1px solid #3a3d44; }
.select-grid .cols th { height: 26px; padding-bottom: 1px; }
.tick input { width: 14px; height: 14px; margin-left: 5px; background: #43464b; }
.th { display: flex; align-items: center; justify-content: space-between; padding-right: 5px; }
.th svg { width: 8px; height: 12px; color: #a9abb0; }
.hits { width: calc(100% - 23px); margin: 10px 13px 0 10px; background: #36653f; color: #d6ecd9; font-size: 15px; }
.hits td { height: 43px; padding-bottom: 3px; font-weight: 500; }
.hits tr { line-height: 20px; }
.hits tr:last-child td { height: 42px; }
.hits input { width: 18px; height: 16px; margin-left: 7px; }
.fade { position: relative; }
.fade::after { content: ""; position: absolute; left: -1px; right: 0; top: 0; height: 60%; background: #36653f; }
.actions { display: flex; justify-content: flex-end; gap: 8px; margin-top: 56px; padding: 8px 5px 5px; border-top: 1px solid #303337; }
.btn { width: 51px; height: 27px; background: #5a5c66; border: 1px solid #666872; font-size: 13px; font-weight: 500; }
.btn.ok { background: #3c9a4a; border-color: #3c9a4a; }
.btn.ok:disabled { background: #2a4233; border-color: #31533b; color: #4f5f54; }

/* application window */
.app-panel { box-shadow: 0 5px 5px #c9c9c9; }
.app-head { display: flex; align-items: center; position: relative; height: 30px; background: #2b2d34; border-bottom: 1px solid #1a1c20; font-size: 9px; line-height: 16px; overflow: hidden; }
.avatar { display: grid; place-items: center; flex: none; width: 26px; height: 26px; margin: -4px 7px 0 -7px; border-radius: 50%; background: #565862; }
.avatar svg { width: 13px; height: 13px; color: #23252b; }
.who { position: relative; width: 73px; margin-top: -2px; line-height: 18px; }
.who::after { content: ""; position: absolute; left: 0; top: 11px; width: 43px; height: 15px; background: #45474e; }
.meta { display: grid; gap: 2px; }
.meta svg { width: 10px; height: 10px; margin-top: 2px; }
.brand { position: absolute; left: 550px; top: 3px; display: flex; align-items: center; width: 97px; height: 20px; background: #fff; color: #174a5c; }
.brand strong { width: 49px; padding-left: 1px; font-size: 8px; line-height: 9px; text-align: right; white-space: nowrap; }
.brand svg { width: 11px; height: 11px; margin: -5px 4px 0 6px; stroke: none; }
.brand em { color: #d84a4f; font: 8px/10px "Noto Sans CJK SC", sans-serif; margin-top: -4px; white-space: nowrap; }
.app-body { display: flex; min-height: 606px; }
.side { width: 112px; flex: none; border-right: 2px solid #16181c; font-size: 11px; overflow: hidden; }
.side a { display: flex; align-items: center; gap: 6px; height: 36px; font-weight: 500; }
.side svg { width: 14px; height: 14px; margin-left: -7px; color: #9fa1a8; }
.side .open { background: #3e4048; }
.side .sub { height: 27px; padding-left: 13px; font-weight: 400; }
.side .sub.on { background: #336d41; }
.side .last { margin-bottom: 4px; }
.app-main { display: flex; flex-direction: column; flex: 1; min-width: 0; }
.tabs.small { gap: 12px; height: 24px; padding-left: 8px; font-size: 11px; line-height: 22px; }
.tabs.small .on { border-width: 1px; }
.app-work { display: flex; flex: 1; padding: 0 5px 0 15px; }
.info.small { width: 158px; margin-right: 30px; font-size: 9px; }
.info.small h4 { height: 42px; }
.info.small h4 span { padding-bottom: 4px; }
.info.small ul { display: flex; flex-direction: column; justify-content: space-between; width: 40px; height: 262px; margin-top: 9px; line-height: 37px; }
.work.small { display: flex; flex-direction: column; font-size: 9px; }
.small .source { margin-top: 13px; }
.small .source label { width: 61px; padding-bottom: 3px; }
.small .pick select { font-size: 12px; }
.small .ico { margin-right: 14px; }
.small .ico.first { margin-right: 28px; }
.small .grid-area { height: 126px; margin-top: 5px; }
.cols.small { line-height: 15px; }
.cols.small th { height: 21px; }
.cols.small td { height: 37px; padding-left: 4px; font-weight: 500; }
.sel { background: #36653f; color: #d6ecd9; }
.cols .off { background: #2c2f35; }
.cols.small td.tick { padding-left: 6px; }
td.tick input { width: 11px; height: 11px; margin: 0; background: #3f9e4f; }
.tree { margin: 33px 0 0 3px; }
.node { display: flex; align-items: center; height: 18px; white-space: nowrap; }
.node.child { padding-left: 15px; }
.caret { width: 7px; height: 5px; margin-right: 5px; }
.node input { width: 11px; height: 11px; margin-right: 10px; }
.kind { width: 12px; height: 12px; margin-right: 5px; color: #9799a1; }
.node label { width: 30px; }
.node.child label { width: 86px; }
.node button { width: 60px; height: 17px; border: 1px solid #6a6c75; background: #565863; line-height: 15px; }
.eye { width: 13px; height: 13px; margin-left: 5px; color: #7d7f87; }
.submit { display: flex; align-items: center; margin-top: auto; height: 22px; }
.submit label { width: 70px; }
.submit .pick { width: 145px; height: 22px; }
.small .submit .pick select { font-size: 9px; color: #777a81; }
.submit .pick svg { top: 5px; }
.go { width: 39px; height: 18px; margin-left: auto; background: #3c9a4a; font-size: 10px; }

/* identity check */
.check-panel .dialog-head { height: 38px; padding: 0 12px 7px 8px; }
.alert { display: flex; align-items: center; gap: 9px; height: 49px; padding: 7px 9px 0; font-size: 13px; }
.alert svg { width: 20px; height: 20px; stroke: #e0b06a; stroke-width: 2; }
.verify { width: calc(100% - 22px); margin-left: 9px; background: #2b2e34; }
.verify th, .verify td { position: relative; height: 45px; text-align: center; border-bottom: 1px solid #383b42; }
.verify th { background: #31343f; }
.verify th + th::before { content: ""; position: absolute; left: 0; top: 13px; height: 19px; border-left: 1px solid #41444e; }
.verify .bad { color: #c8663d; }
.verify td:first-child { padding-right: 6px; }
.verify .result td { height: 53px; }
.verdict { display: flex; align-items: center; justify-content: center; gap: 4px; color: #3f9450; }
.verdict svg { fill: #dd6b3a; stroke: none; }
.verdict svg path { stroke: #4b2b20; stroke-width: 1; }
.check-panel .actions { margin-top: 16px; padding: 8px 13px 8px; }
```
